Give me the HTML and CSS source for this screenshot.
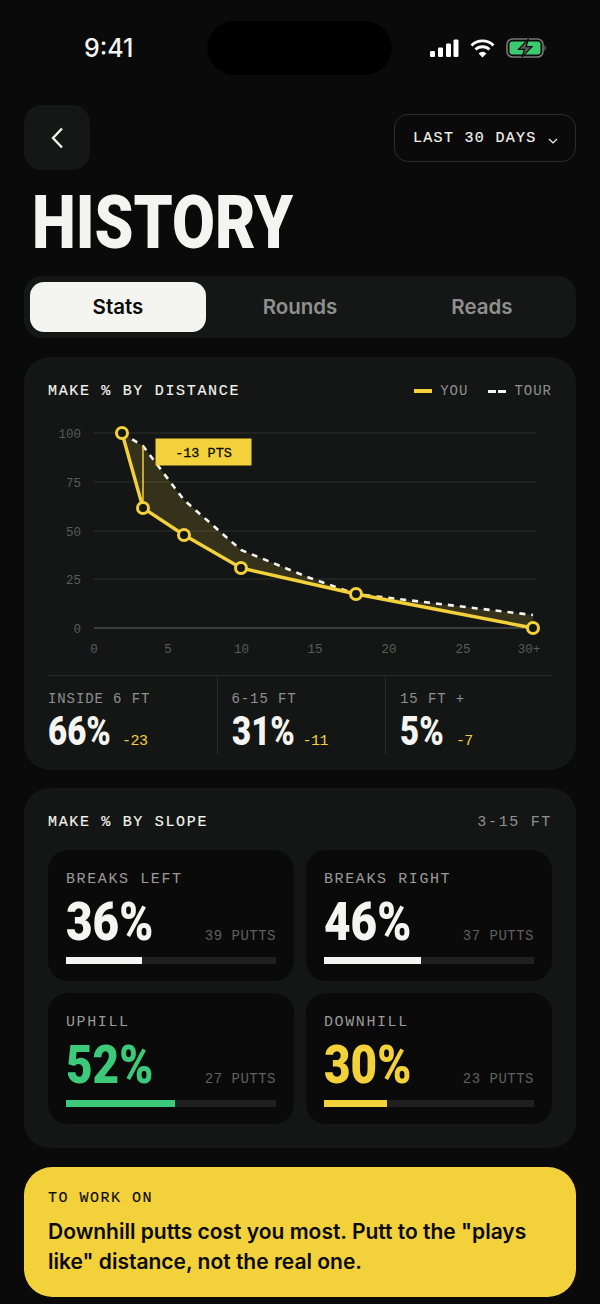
FILE: index.html
```html
<!DOCTYPE html>
<html lang="en">
<head>
  <meta charset="UTF-8">
  <title>History</title>
  <link rel="stylesheet" href="styles.css">
</head>
<body>
  <div class="statusbar">
    <span class="clock">9:41</span>
    <div class="island"></div>
    <div class="status-icons">
      <svg width="30" height="19" viewBox="0 0 30 19">
        <rect x="1" y="12" width="5" height="6" rx="1.2" fill="#fff"/>
        <rect x="9" y="8.5" width="5" height="9.5" rx="1.2" fill="#fff"/>
        <rect x="17" y="4.5" width="5" height="13.5" rx="1.2" fill="#fff"/>
        <rect x="24.5" y="0.5" width="5" height="17.5" rx="1.2" fill="#fff"/>
      </svg>
      <svg width="25" height="19" viewBox="0 0 25 19">
        <path d="M1.5 6.5 A15.5 15.5 0 0 1 23.5 6.5" fill="none" stroke="#fff" stroke-width="2.8"/>
        <path d="M5.5 10.6 A10 10 0 0 1 19.5 10.6" fill="none" stroke="#fff" stroke-width="2.8"/>
        <path d="M12.5 18.5 L8.6 14.4 A5.4 5.4 0 0 1 16.4 14.4 Z" fill="#fff"/>
      </svg>
      <svg width="41" height="20" viewBox="0 0 41 20">
        <rect x="1" y="1" width="36" height="18" rx="5.5" fill="none" stroke="#777" stroke-width="1.6"/>
        <rect x="3.5" y="3.5" width="31" height="13" rx="3" fill="#3dc96f"/>
        <path d="M38.6 7 C40.2 7.5 40.2 12.5 38.6 13 Z" fill="#777"/>
        <path d="M22.5 0.8 L12.5 11.3 H18.5 L16 19.2 L26 8.7 H20 Z" fill="#5a5d5a" stroke="#0a0a0a" stroke-width="1.2"/>
      </svg>
    </div>
  </div>

  <div class="topbar">
    <button class="back" type="button">
      <svg width="14" height="22" viewBox="0 0 14 22">
        <path d="M12 1.5 L3 11 L12 20.5" fill="none" stroke="#f4f4f0" stroke-width="2.4"/>
      </svg>
    </button>
    <button class="range" type="button">
      LAST 30 DAYS
      <svg width="10" height="6" viewBox="0 0 10 6">
        <path d="M1 1 L5 5 L9 1" fill="none" stroke="#f4f4f0" stroke-width="1.2"/>
      </svg>
    </button>
  </div>

  <h1 class="title">HISTORY</h1>

  <nav class="tabs">
    <a class="tab active">Stats</a>
    <a class="tab">Rounds</a>
    <a class="tab">Reads</a>
  </nav>

  <!-- distance card -->
  <section class="card card-distance">
    <div class="card-head">
      <h2>MAKE % BY DISTANCE</h2>
      <div class="legend">
        <i class="key-you"></i><span>YOU</span>
        <i class="key-tour"></i><span>TOUR</span>
      </div>
    </div>

    <svg class="chart" width="504" height="260" viewBox="48 410 504 260">
      <g stroke="#262827" stroke-width="1.5">
        <line x1="94" y1="433" x2="536" y2="433"/>
        <line x1="94" y1="482" x2="536" y2="482"/>
        <line x1="94" y1="531" x2="536" y2="531"/>
        <line x1="94" y1="579" x2="536" y2="579"/>
      </g>
      <line x1="94" y1="628" x2="536" y2="628" stroke="#4a4b4a" stroke-width="1.5"/>

      <g class="axis" text-anchor="end">
        <text x="81" y="438">100</text>
        <text x="81" y="487">75</text>
        <text x="81" y="536">50</text>
        <text x="81" y="584">25</text>
        <text x="81" y="633">0</text>
      </g>
      <g class="axis" text-anchor="middle">
        <text x="94" y="653">0</text>
        <text x="168" y="653">5</text>
        <text x="241.5" y="653">10</text>
        <text x="315" y="653">15</text>
        <text x="389" y="653">20</text>
        <text x="463" y="653">25</text>
        <text x="529" y="653">30+</text>
      </g>

      <path d="M122 433 L143 446 L184 500 L241 550 L310 578 L356 594 L533 615 L533 628 L356 594 L241 568 L184 535 L143 508 Z" fill="#f2d13a" fill-opacity="0.15"/>
      <path d="M122 433 L143 446 L184 500 L241 550 L310 578 L356 594 L533 615" fill="none" stroke="#f4f4f0" stroke-width="2.6" stroke-dasharray="6 6"/>
      <line x1="143" y1="446" x2="143" y2="508" stroke="#f2d13a" stroke-width="1.5"/>
      <path d="M122 433 L143 508 L184 535 L241 568 L356 594 L533 628" fill="none" stroke="#f2d13a" stroke-width="3.4"/>
      <g fill="#141615" stroke="#f2d13a" stroke-width="3">
        <circle cx="122" cy="433" r="5.5"/>
        <circle cx="143" cy="508" r="5.5"/>
        <circle cx="184" cy="535" r="5.5"/>
        <circle cx="241" cy="568" r="5.5"/>
        <circle cx="356" cy="594" r="5.5"/>
        <circle cx="533" cy="628" r="5.5"/>
      </g>

      <rect x="155.5" y="438.5" width="96" height="27" fill="#f2d13a"/>
      <text class="tag" x="203.5" y="457" text-anchor="middle">-13 PTS</text>
    </svg>

    <div class="stats">
      <div class="stat">
        <div class="stat-label">INSIDE 6 FT</div>
        <div class="stat-row"><span class="stat-num">66%</span><span class="stat-delta">-23</span></div>
      </div>
      <div class="stat">
        <div class="stat-label">6-15 FT</div>
        <div class="stat-row"><span class="stat-num">31%</span><span class="stat-delta">-11</span></div>
      </div>
      <div class="stat">
        <div class="stat-label">15 FT +</div>
        <div class="stat-row"><span class="stat-num">5%</span><span class="stat-delta">-7</span></div>
      </div>
    </div>
  </section>

  <!-- slope card -->
  <section class="card card-slope">
    <div class="card-head">
      <h2>MAKE % BY SLOPE</h2>
      <span class="card-note">3-15 FT</span>
    </div>
    <div class="tiles">
      <div class="tile">
        <div class="tile-label">BREAKS LEFT</div>
        <div class="tile-row"><span class="tile-num">36%</span><span class="tile-putts">39 PUTTS</span></div>
        <div class="bar"><div class="fill fill-white" style="width: 36%"></div></div>
      </div>
      <div class="tile">
        <div class="tile-label">BREAKS RIGHT</div>
        <div class="tile-row"><span class="tile-num">46%</span><span class="tile-putts">37 PUTTS</span></div>
        <div class="bar"><div class="fill fill-white" style="width: 46%"></div></div>
      </div>
      <div class="tile">
        <div class="tile-label">UPHILL</div>
        <div class="tile-row"><span class="tile-num green">52%</span><span class="tile-putts">27 PUTTS</span></div>
        <div class="bar"><div class="fill fill-green" style="width: 52%"></div></div>
      </div>
      <div class="tile">
        <div class="tile-label">DOWNHILL</div>
        <div class="tile-row"><span class="tile-num yellow">30%</span><span class="tile-putts">23 PUTTS</span></div>
        <div class="bar"><div class="fill fill-yellow" style="width: 30%"></div></div>
      </div>
    </div>
  </section>

  <section class="tip">
    <div class="tip-label">TO WORK ON</div>
    <p>Downhill putts cost you most. Putt to the "plays like" distance, not the real one.</p>
  </section>
</body>
</html>
```

FILE: styles.css
```css
* {
    box-sizing: border-box;
}

body {
    margin: 0;
    width: 600px;
    height: 1304px;
    overflow: hidden;
    background: #0a0a0a;
    color: #f4f4f0;
    font-family: Inter, "Liberation Sans", sans-serif;
}

/******************* status bar *******************/

.statusbar {
    display: flex;
    align-items: center;
    height: 54px;
    margin: 21px 0 30px;
    padding: 0 53px 0 84px;
}

.clock {
    width: 123px;
    font-size: 25px;
    font-weight: 500;
}

.island {
    width: 186px;
    height: 54px;
    border-radius: 27px;
    background: #000;
}

.status-icons {
    display: flex;
    align-items: center;
    gap: 11px;
    margin-left: 37px;
}

/******************* top *******************/

.topbar {
    display: flex;
    align-items: center;
    justify-content: space-between;
    padding: 0 24px;
}

.back {
    display: flex;
    align-items: center;
    justify-content: center;
    width: 66px;
    height: 65px;
    padding: 0;
    border: 0;
    border-radius: 18px;
    background: #151716;
}

.range {
    display: flex;
    align-items: center;
    gap: 11px;
    width: 182px;
    height: 48px;
    padding: 2px 0 0 18px;
    border: 1.5px solid #2c2e2d;
    border-radius: 14px;
    background: none;
    color: #f4f4f0;
    font: 15px "Liberation Mono", monospace;
    letter-spacing: 1.3px;
    -webkit-text-stroke: 0.15px #f4f4f0;
    white-space: nowrap;
}

.range svg {
    margin-top: 4px;
}

.title {
    width: 300px;
    height: 106px;
    margin: 0 0 0 31.5px;
    padding-top: 2px;
    font: 900 75px/100px Roboto, sans-serif;
    transform: scaleX(0.83);
    transform-origin: left;
}

/******************* tabs *******************/

.tabs {
    display: flex;
    gap: 6px;
    height: 62px;
    margin: 0 24px 19px;
    padding: 6px;
    border-radius: 18px;
    background: #151716;
}

.tab {
    flex: 1;
    border-radius: 14px;
    color: #8f908e;
    font-size: 20.5px;
    font-weight: 600;
    line-height: 50px;
    text-align: center;
}

.tab.active {
    background: #f4f4f0;
    color: #0a0a0a;
}

/******************* cards *******************/

.card {
    margin: 0 24px 18px;
    padding: 24px;
    border-radius: 26px;
    background: #141615;
}

.card-distance {
    height: 413px;
}

.card-slope {
    height: 360px;
    margin-bottom: 19px;
}

.card-head {
    display: flex;
    align-items: center;
    justify-content: space-between;
    height: 18px;
    padding-top: 2px;
}

.card-head h2 {
    margin: 0;
    font: 400 15px "Liberation Mono", monospace;
    letter-spacing: 1.67px;
    -webkit-text-stroke: 0.15px #f4f4f0;
}

.card-note {
    color: #8f908e;
    font: 15px "Liberation Mono", monospace;
    letter-spacing: 1.67px;
}

.legend {
    display: flex;
    align-items: center;
    color: #8f908e;
    font: 14px "Liberation Mono", monospace;
    letter-spacing: 1px;
}

.key-you {
    width: 18px;
    height: 4px;
    margin-right: 8px;
    background: #f2d13a;
}

.key-tour {
    width: 18px;
    height: 3px;
    margin: 0 8px 0 20px;
    background: repeating-linear-gradient(90deg, #f4f4f0 0 8px, transparent 8px 10px);
}

.chart {
    display: block;
    margin-top: 11px;
}

.axis text {
    fill: #5a5b5a;
    font: 12.5px "Liberation Mono", monospace;
}

.tag {
    fill: #0a0a0a;
    font: 400 13.5px "Liberation Mono", monospace;
    stroke: #0a0a0a;
    stroke-width: 0.3px;
}

/******************* distance stats *******************/

.stats {
    display: grid;
    grid-template-columns: 168.5px 168.5px 167px;
    height: 77px;
    margin-top: 5px;
    border-top: 1.5px solid #2a2c2b;
}

.stat {
    padding: 15px 0 0 14px;
    border-left: 1.5px solid #2a2c2b;
}

.stat:first-child {
    padding-left: 0;
    border-left: 0;
}

.stat-label {
    color: #8f908e;
    font: 14px/16px "Liberation Mono", monospace;
    letter-spacing: 0.9px;
}

.stat-row {
    display: flex;
    align-items: baseline;
    margin-top: 3px;
}

.stat-num {
    margin-right: -2px;
    font: 900 40px/44px Roboto, sans-serif;
    transform: scaleX(0.825);
    transform-origin: left;
}

.stat-delta {
    color: #f2d13a;
    font: 15px "Liberation Mono", monospace;
    letter-spacing: -0.6px;
}

.stat:nth-child(2) .stat-delta {
    margin-left: -3px;
}

.stat:nth-child(3) .stat-delta {
    margin-left: 5px;
}

/******************* slope tiles *******************/

.tiles {
    display: grid;
    grid-template-columns: 246px 246px;
    gap: 12px;
    margin-top: 20px;
}

.tile {
    height: 131px;
    padding: 20px 18px 0;
    border-radius: 20px;
    background: #0a0a0a;
}

.tile-label {
    color: #9a9b99;
    font: 15px/20px "Liberation Mono", monospace;
    letter-spacing: 1.6px;
}

.tile-row {
    display: flex;
    align-items: baseline;
    justify-content: space-between;
    height: 64px;
    margin-top: 3px;
}

.tile-num {
    font: 900 53px/58px Roboto, sans-serif;
    transform: scaleX(0.865);
    transform-origin: left;
}

.tile-num.green {
    color: #3dc97a;
}

.tile-num.yellow {
    color: #f2d13a;
}

.tile-putts {
    color: #5f605f;
    font: 14px "Liberation Mono", monospace;
    letter-spacing: 0.5px;
}

.bar {
    height: 7px;
    background: #1f201f;
}

.fill {
    height: 7px;
}

.fill-white {
    background: #f4f4f0;
}

.fill-green {
    background: #3dc97a;
}

.fill-yellow {
    background: #f2d13a;
}

/******************* tip *******************/

.tip {
    height: 130px;
    margin: 0 24px;
    padding: 23px 24px 0;
    border-radius: 28px;
    background: #f2d13a;
    color: #0a0a0a;
}

.tip-label {
    font: 15px/18px "Liberation Mono", monospace;
    letter-spacing: 1.5px;
    -webkit-text-stroke: 0.15px #0a0a0a;
}

.tip p {
    margin: 9px 0 0;
    font-size: 21px;
    font-weight: 600;
    line-height: 30px;
}
```
